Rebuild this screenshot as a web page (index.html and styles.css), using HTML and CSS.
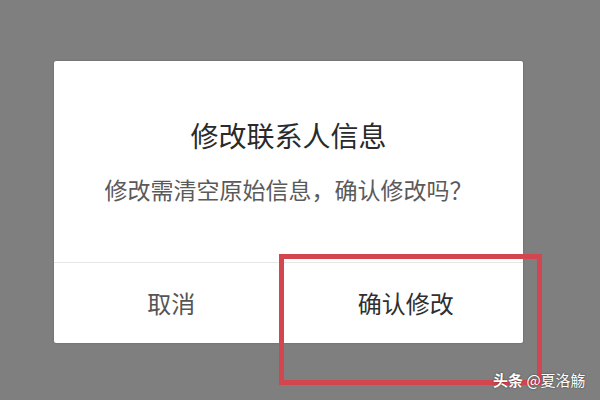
FILE: index.html
```html
<!DOCTYPE html>
<html lang="zh-CN">
<head>
<meta charset="utf-8">
<link rel="stylesheet" href="styles.css">
</head>
<body>
<div class="screen">
  <div class="dialog">
    <div class="dialog-body">
      <div class="title">修改联系人信息</div>
      <div class="message">修改需清空原始信息，确认修改吗？</div>
    </div>
    <div class="actions">
      <div class="btn cancel">取消</div>
      <div class="btn confirm">确认修改</div>
    </div>
  </div>
  <div class="highlight"></div>
  <div class="watermark"><b>头条</b> @夏洛觞</div>
</div>
</body>
</html>
```
FILE: styles.css
```css
html, body {
  margin: 0;
  padding: 0;
}
body {
  background: #7f7f7f;
  font-family: "Noto Sans CJK SC", "Noto Sans", sans-serif;
}
.screen {
  position: relative;
  width: 600px;
  height: 400px;
  overflow: hidden;
  padding: 61px 0 0 54px;
  box-sizing: border-box;
}
.dialog {
  width: 469px;
  height: 282px;
  background: #fff;
  border-radius: 2px;
  display: flex;
  flex-direction: column;
  box-shadow: 0 0 2px rgba(0,0,0,0.25);
}
.dialog-body {
  height: 202px;
  box-sizing: border-box;
  border-bottom: 1px solid #e6e6e6;
  display: flex;
  flex-direction: column;
  align-items: center;
  padding-top: 60px;
}
.title {
  font-size: 28px;
  line-height: 28px;
  color: #2a2a2a;
}
.message {
  margin-top: 29px;
  font-size: 23px;
  line-height: 23px;
  color: #5a5a5a;
}
.actions {
  flex: 1;
  display: flex;
}
.btn {
  flex: 1;
  display: flex;
  align-items: center;
  justify-content: center;
  font-size: 24px;
  line-height: 24px;
}
.cancel { color: #555; }
.confirm { color: #2f2f2f; }
.highlight {
  position: absolute;
  left: 279px;
  top: 254px;
  width: 263px;
  height: 131px;
  box-sizing: border-box;
  border: 5px solid #d4464f;
}
.watermark {
  position: absolute;
  left: 493px;
  top: 371px;
  font-size: 15px;
  line-height: 17px;
  color: #fff;
  text-shadow: 0 0 2px rgba(0,0,0,0.6);
  white-space: nowrap;
}
.watermark b { font-weight: 700; }
```
